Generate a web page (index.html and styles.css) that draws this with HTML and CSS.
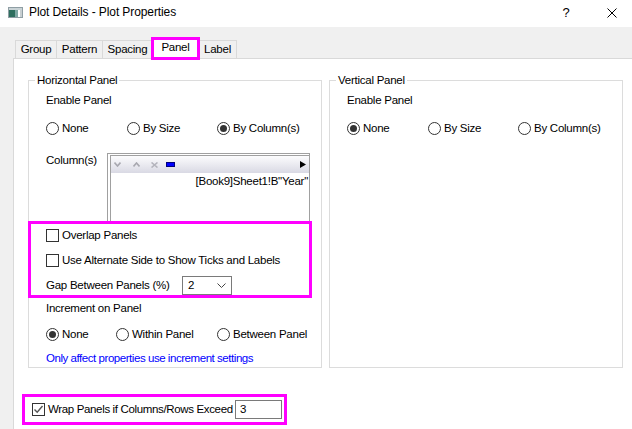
FILE: index.html
```html
<!DOCTYPE html>
<html>
<head>
<meta charset="utf-8">
<link rel="stylesheet" href="styles.css">
</head>
<body>
<div class="titlebar">
  <svg class="app-icon" width="15" height="11" viewBox="0 0 15 11">
    <rect x="0.5" y="0.5" width="14" height="10" fill="#fff" stroke="#8f9ea4"/>
    <rect x="1" y="1" width="13" height="2" fill="#c9d3d6"/>
    <rect x="1" y="3" width="6" height="7" fill="#2f6f5f"/>
    <rect x="7" y="3" width="3" height="7" fill="#7fa8a4"/>
    <rect x="10" y="3" width="2" height="7" fill="#ffffff"/>
    <rect x="12" y="3" width="2" height="7" fill="#c8cfd2"/>
  </svg>
  <span class="title">Plot Details - Plot Properties</span>
  <span class="help">?</span>
  <svg class="close" width="10" height="10" viewBox="0 0 10 10">
    <path d="M0.5 0.5 L9.5 9.5 M9.5 0.5 L0.5 9.5" stroke="#000" stroke-width="1"/>
  </svg>
</div>

<div class="tabbar">
  <div class="tab t-group">Group</div>
  <div class="tab t-pattern">Pattern</div>
  <div class="tab t-spacing">Spacing</div>
  <div class="tab t-panel active">Panel</div>
  <div class="tab t-label">Label</div>
</div>

<div class="page">
  <div class="groups">
    <div class="group">
      <div class="legend">Horizontal Panel</div>
      <div class="row text-row first">Enable Panel</div>
      <div class="row radio-row">
        <label class="radio w81"><span class="circle"></span>None</label>
        <label class="radio w90"><span class="circle"></span>By Size</label>
        <label class="radio"><span class="circle on"></span>By Column(s)</label>
      </div>
      <div class="row columns-row">
        <div class="col-label">Column(s)</div>
        <div class="listbox">
          <div class="list-inner">
            <div class="toolbar">
              <svg width="7" height="5" viewBox="0 0 7 5" class="tb tb-down"><path d="M0.5 0.5 L3.5 4 L6.5 0.5" fill="none" stroke="#a8a8b0" stroke-width="1.6"/></svg>
              <svg width="7" height="5" viewBox="0 0 7 5" class="tb tb-up"><path d="M0.5 4.5 L3.5 1 L6.5 4.5" fill="none" stroke="#a8a8b0" stroke-width="1.6"/></svg>
              <svg width="7" height="6" viewBox="0 0 7 6" class="tb tb-x"><path d="M0.5 0.5 L6.5 5.5 M6.5 0.5 L0.5 5.5" fill="none" stroke="#b4b4bc" stroke-width="1.6"/></svg>
              <span class="tb-blue"></span>
              <span class="tb-spacer"></span>
              <svg width="6" height="7" viewBox="0 0 6 7" class="tb tb-play"><path d="M0 0 L6 3.5 L0 7 Z" fill="#000"/></svg>
            </div>
            <div class="list-item">[Book9]Sheet1!B&quot;Year&quot;</div>
          </div>
        </div>
      </div>
      <div class="hl">
        <label class="check first-check"><span class="box"></span>Overlap Panels</label>
        <label class="check second-check"><span class="box"></span>Use Alternate Side to Show Ticks and Labels</label>
        <div class="gap-row">
          <span class="gap-label">Gap Between Panels (%)</span>
          <div class="combo">
            <span class="combo-val">2</span>
            <svg width="9" height="5" viewBox="0 0 9 5"><path d="M0.5 0.5 L4.5 4.5 L8.5 0.5" fill="none" stroke="#444" stroke-width="1"/></svg>
          </div>
        </div>
      </div>
      <div class="row text-row inc">Increment on Panel</div>
      <div class="row radio-row inc-radios">
        <label class="radio w70"><span class="circle on"></span>None</label>
        <label class="radio w101"><span class="circle"></span>Within Panel</label>
        <label class="radio"><span class="circle"></span>Between Panel</label>
      </div>
      <div class="row note">Only affect properties use increment settings</div>
    </div>

    <div class="group">
      <div class="legend">Vertical Panel</div>
      <div class="row text-row first">Enable Panel</div>
      <div class="row radio-row">
        <label class="radio w81"><span class="circle on"></span>None</label>
        <label class="radio w90"><span class="circle"></span>By Size</label>
        <label class="radio"><span class="circle"></span>By Column(s)</label>
      </div>
    </div>
  </div>

  <div class="wrap">
    <span class="box checked">
      <svg width="11" height="11" viewBox="0 0 11 11"><path d="M1.5 5.5 L4.2 8.3 L9.5 2" fill="none" stroke="#555" stroke-width="1.4"/></svg>
    </span>
    <span class="wrap-label">Wrap Panels if Columns/Rows Exceed</span>
    <div class="num-input">3</div>
  </div>
</div>
</body>
</html>
```

FILE: styles.css
```css
html, body {
  margin: 0;
  padding: 0;
}
body {
  width: 632px;
  height: 429px;
  overflow: hidden;
  background: #f0f0f0;
  font-family: "Liberation Sans", Arial, sans-serif;
  font-size: 11.5px;
  letter-spacing: -0.25px;
  line-height: 15px;
  color: #000;
  white-space: nowrap;
}

/* title bar */
.titlebar {
  height: 27px;
  background: #fff;
  display: flex;
  align-items: center;
  padding-left: 8px;
  padding-right: 15px;
  font-size: 12px;
  letter-spacing: -0.1px;
}
.app-icon {
  margin-right: 6px;
  margin-top: -2px;
}
.title {
  flex: 1;
  margin-top: -2px;
}
.help {
  width: 20px;
  text-align: center;
  margin-right: 31px;
  margin-top: -2px;
  font-size: 13px;
}
.close {
  margin-top: -2px;
}

/* tabs */
.tabbar {
  height: 31px;
  display: flex;
  align-items: flex-end;
  padding-left: 15px;
  box-sizing: border-box;
}
.tab {
  box-sizing: border-box;
  height: 18px;
  border: 1px solid #d9d9d9;
  border-bottom: none;
  background: #f0f0f0;
  margin-left: -1px;
  text-align: center;
  line-height: 17px;
}
.t-group { width: 42px; margin-left: 0; }
.t-pattern { width: 47px; }
.t-spacing { width: 51px; }
.t-panel { width: 47px; }
.t-label { width: 39px; }
.tab.active {
  height: 21px;
  margin-bottom: -1px;
  background: #fff;
  position: relative;
  z-index: 2;
  line-height: 17px;
  outline: 3px solid #f0f;
  outline-offset: -2px;
}

/* page */
.page {
  background: #fff;
  border-top: 1px solid #d9d9d9;
  border-left: 1px solid #d9d9d9;
  margin-left: 13px;
  height: 371px;
  box-sizing: border-box;
  overflow: hidden;
}
.groups {
  display: flex;
  gap: 7px;
  margin-top: 21px;
  padding-left: 14px;
}
.group {
  width: 294px;
  height: 288px;
  box-sizing: border-box;
  border: 1px solid #dcdcdc;
  display: flex;
  flex-direction: column;
  align-items: flex-start;
}
.legend {
  margin-top: -8px;
  margin-left: 6px;
  padding: 0 2px;
  background: #fff;
  line-height: 15px;
}
.row {
  padding-left: 17px;
}
.text-row.first {
  margin-top: 5px;
}
.radio-row {
  display: flex;
  margin-top: 13px;
  height: 15px;
}
.radio {
  display: flex;
  align-items: center;
}
.w81 { width: 81px; }
.w90 { width: 90px; }
.w70 { width: 70px; }
.w101 { width: 101px; }
.circle {
  width: 13px;
  height: 13px;
  box-sizing: border-box;
  border: 1px solid #333;
  border-radius: 50%;
  background: #fff;
  margin-right: 3px;
  display: flex;
  align-items: center;
  justify-content: center;
}
.circle.on::after {
  content: "";
  width: 7px;
  height: 7px;
  border-radius: 50%;
  background: #333;
}

/* columns list */
.columns-row {
  display: flex;
  margin-top: 17px;
}
.col-label {
  width: 61px;
}
.listbox {
  width: 203px;
  height: 70px;
  box-sizing: border-box;
  border: 1px solid #a0a0a0;
  padding: 1px 0 0 2px;
  background: #fff;
}
.list-inner {
  height: 100%;
  border-left: 1px solid #a0a0a0;
  border-top: 1px solid #a0a0a0;
  box-sizing: border-box;
}
.toolbar {
  height: 17px;
  background: linear-gradient(#fcfcfd, #d9d9e4);
  display: flex;
  align-items: center;
  padding-left: 3px;
  padding-right: 3px;
}
.tb { display: block; }
.tb-down { margin-right: 12px; }
.tb-up { margin-right: 11px; }
.tb-x { margin-right: 8px; }
.tb-blue {
  width: 9px;
  height: 5px;
  box-sizing: border-box;
  background: #0000ff;
  border: 1px solid #00007a;
}
.tb-spacer { flex: 1; }
.list-item {
  text-align: right;
  padding-right: 1px;
  line-height: 15px;
  margin-top: 1px;
}

/* highlight block */
.hl {
  position: relative;
  z-index: 1;
  margin-top: -2px;
  margin-left: -1px;
  width: 284px;
  box-sizing: border-box;
  border: 3px solid #f0f;
  padding-left: 15px;
  display: flex;
  flex-direction: column;
  align-items: flex-start;
}
.check {
  display: flex;
  align-items: center;
  height: 15px;
}
.first-check { margin-top: 4px; }
.second-check { margin-top: 10px; }
.box {
  width: 13px;
  height: 13px;
  box-sizing: border-box;
  border: 1px solid #333;
  background: #fff;
  margin-right: 3px;
  display: flex;
  align-items: center;
  justify-content: center;
  flex: none;
}
.gap-row {
  display: flex;
  align-items: center;
  margin-top: 8px;
  height: 19px;
}
.gap-label {
  width: 136px;
}
.combo {
  width: 50px;
  height: 19px;
  box-sizing: border-box;
  border: 1px solid #7a7a7a;
  display: flex;
  align-items: center;
  padding-left: 5px;
  padding-right: 5px;
  justify-content: space-between;
}

.inc { margin-top: 3px; }
.inc-radios { margin-top: 11px; }
.note {
  margin-top: 9px;
  color: #0000ff;
  letter-spacing: -0.45px;
}

/* wrap row */
.wrap {
  margin-top: 26px;
  margin-left: 8px;
  width: 265px;
  height: 31px;
  box-sizing: border-box;
  border: 3px solid #f0f;
  display: flex;
  align-items: center;
  padding-left: 7px;
}
.wrap-label {
  width: 187px;
  letter-spacing: -0.35px;
}
.num-input {
  width: 47px;
  height: 19px;
  box-sizing: border-box;
  border: 1px solid #7a7a7a;
  padding-left: 4px;
  line-height: 17px;
}
```
